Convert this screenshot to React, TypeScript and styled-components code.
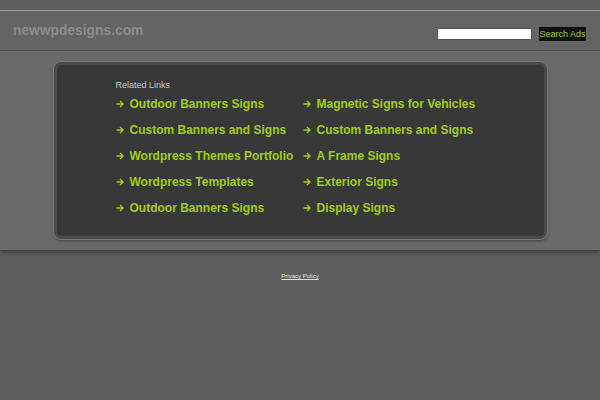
import React from 'react';
import styled, { createGlobalStyle } from 'styled-components';

const Global = createGlobalStyle`
  html, body { margin: 0; padding: 0; background: #5f5f5f; }
  body { font-family: "Liberation Sans", Arial, sans-serif; }
`;

const Top = styled.div`
  height: 10px;
  background: #5e5e5e;
  border-bottom: 1px solid #9a9a9a;
`;

const Header = styled.div`
  height: 39px;
  background: #646464;
  border-bottom: 1px solid #575757;
  display: flex;
  align-items: center;
  justify-content: space-between;
  padding: 0 14px 0 13px;
`;

const Domain = styled.div`
  font-size: 13.8px;
  font-weight: bold;
  color: #8c8c8c;
`;

const SearchForm = styled.form`
  display: flex;
  align-items: center;
  gap: 7px;
  margin-top: 7px;
`;

const SearchInput = styled.input`
  box-sizing: border-box;
  width: 95px;
  height: 12px;
  border: 1px solid #555;
  padding: 1px;
  background: #fff;
  outline: none;
`;

const SearchButton = styled.button`
  background: #111;
  color: #9ccc33;
  border: none;
  font-family: "Liberation Sans", Arial, sans-serif;
  font-size: 9px;
  height: 14px;
  width: 47px;
  padding: 0;
`;

const Band = styled.div`
  background: #6a6a6a;
  padding: 11px 0 11px;
  box-shadow: 0 3px 5px rgba(0, 0, 0, 0.35);
  position: relative;
`;

const Box = styled.div`
  box-sizing: border-box;
  width: 493px;
  margin: 0 auto;
  background: #383838;
  border: 3px solid #4a4a4a;
  border-radius: 7px;
  box-shadow: 0 0 0 1px #777, 0 2px 3px rgba(0, 0, 0, 0.4);
  padding: 15px 0 19px 59px;
`;

const Title = styled.div`
  font-size: 9px;
  color: #c8c8c8;
  margin-bottom: 5px;
`;

const Grid = styled.div`
  display: grid;
  grid-template-columns: 187px 1fr;
  row-gap: 8px;
`;

const LinkItem = styled.a`
  display: flex;
  align-items: center;
  gap: 6px;
  height: 18px;
  font-size: 12px;
  font-weight: bold;
  color: #a2cc1c;
  text-decoration: none;
  white-space: nowrap;
`;

const Arrow = () => (
  <svg width="8" height="8" viewBox="0 0 8 8" style={{ flex: 'none' }}>
    <path d="M0.5 4H7M4 1L7 4L4 7" fill="none" stroke="#a2cc1c" strokeWidth="1.4" />
  </svg>
);

const Footer = styled.div`
  text-align: center;
  padding-top: 14px;
`;

const Privacy = styled.a`
  font-size: 6px;
  color: #e0e0e0;
  text-decoration: underline;
`;

const left = [
  'Outdoor Banners Signs',
  'Custom Banners and Signs',
  'Wordpress Themes Portfolio',
  'Wordpress Templates',
  'Outdoor Banners Signs',
];
const right = [
  'Magnetic Signs for Vehicles',
  'Custom Banners and Signs',
  'A Frame Signs',
  'Exterior Signs',
  'Display Signs',
];

const App = () => {
  const items: string[] = [];
  left.forEach((l, i) => {
    items.push(l);
    items.push(right[i]);
  });
  return (
    <>
      <Global />
      <Top />
      <Header>
        <Domain>newwpdesigns.com</Domain>
        <SearchForm onSubmit={(e) => e.preventDefault()}>
          <SearchInput type="text" />
          <SearchButton type="submit">Search Ads</SearchButton>
        </SearchForm>
      </Header>
      <Band>
        <Box>
          <Title>Related Links</Title>
          <Grid>
            {items.map((t, i) => (
              <LinkItem key={i} href="#">
                <Arrow />
                {t}
              </LinkItem>
            ))}
          </Grid>
        </Box>
      </Band>
      <Footer>
        <Privacy href="#">Privacy Policy</Privacy>
      </Footer>
    </>
  );
};

export default App;
